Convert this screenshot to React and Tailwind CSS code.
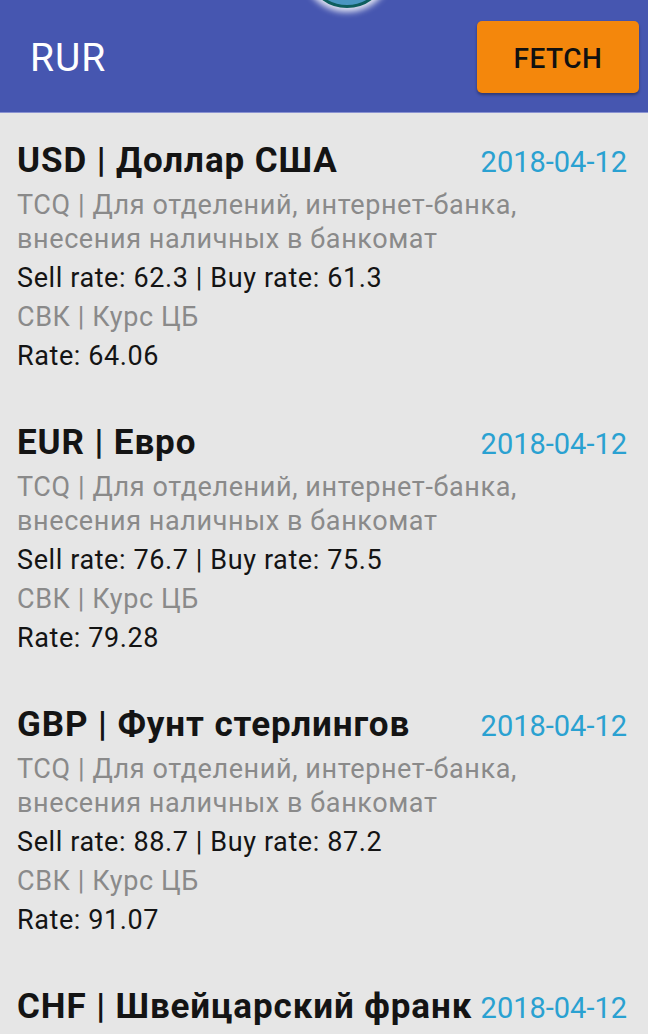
import React from "react";

const items = [
  { code: "USD", name: "Доллар США", sell: "62.3", buy: "61.3", rate: "64.06" },
  { code: "EUR", name: "Евро", sell: "76.7", buy: "75.5", rate: "79.28" },
  { code: "GBP", name: "Фунт стерлингов", sell: "88.7", buy: "87.2", rate: "91.07" },
  { code: "CHF", name: "Швейцарский франк", sell: "88.7", buy: "87.2", rate: "91.07" },
];

function Item({ it }) {
  return (
    <div className="pb-[47px]">
      <div className="flex items-baseline justify-between">
        <div className="text-[35px] leading-[40px] font-bold tracking-[0.9px] text-[#141414] whitespace-nowrap">
          {it.code} | {it.name}
        </div>
        <div className="text-[29px] leading-[40px] text-[#2aa1d1] whitespace-nowrap">2018-04-12</div>
      </div>
      <div className="mt-[6px] text-[27px] leading-[34px] tracking-[0.6px] text-[#8a8a8a] whitespace-nowrap">
        TCQ | Для отделений, интернет-банка,
        <br />
        внесения наличных в банкомат
      </div>
      <div className="mt-[3px] text-[27px] leading-[39px] tracking-[0.6px] text-[#141414]">
        Sell rate: {it.sell} | Buy rate: {it.buy}
      </div>
      <div className="text-[27px] leading-[39px] tracking-[0.6px] text-[#8a8a8a]">СВК | Курс ЦБ</div>
      <div className="text-[27px] leading-[39px] tracking-[0.6px] text-[#141414]">Rate: {it.rate}</div>
    </div>
  );
}

export default function App() {
  return (
    <div className="w-[650px] h-[1034px] bg-white overflow-hidden" style={{ fontFamily: "Roboto, 'Noto Sans', sans-serif" }}>
      <div className="relative w-[648px] h-[1034px] bg-[#e6e6e6] overflow-hidden">
        <div className="h-[113px] bg-[#4656b0] border-b border-[#8a93d2] flex items-center justify-between pl-[30px] pr-[9px]">
          <div className="text-[39px] tracking-[1px] text-white leading-none pt-[4px]">RUR</div>
          <button className="w-[162px] h-[72px] mt-[2px] rounded-[5px] bg-[#f4870c] shadow-[0_2px_3px_rgba(0,0,0,0.35)] text-[28px] font-medium text-[#111] tracking-[0.5px] pt-[4px]">
            FETCH
          </button>
        </div>
        <div className="absolute left-[305px] top-[-76px] w-[84px] h-[84px] rounded-full bg-[#4a96c2] border-[3px] border-[#0e5e5e] shadow-[0_0_6px_4px_rgba(255,255,255,0.85)]" />
        <div className="pt-[28px] pl-[17px] pr-[21px]">
          {items.map((it) => (
            <Item key={it.code} it={it} />
          ))}
        </div>
      </div>
    </div>
  );
}
